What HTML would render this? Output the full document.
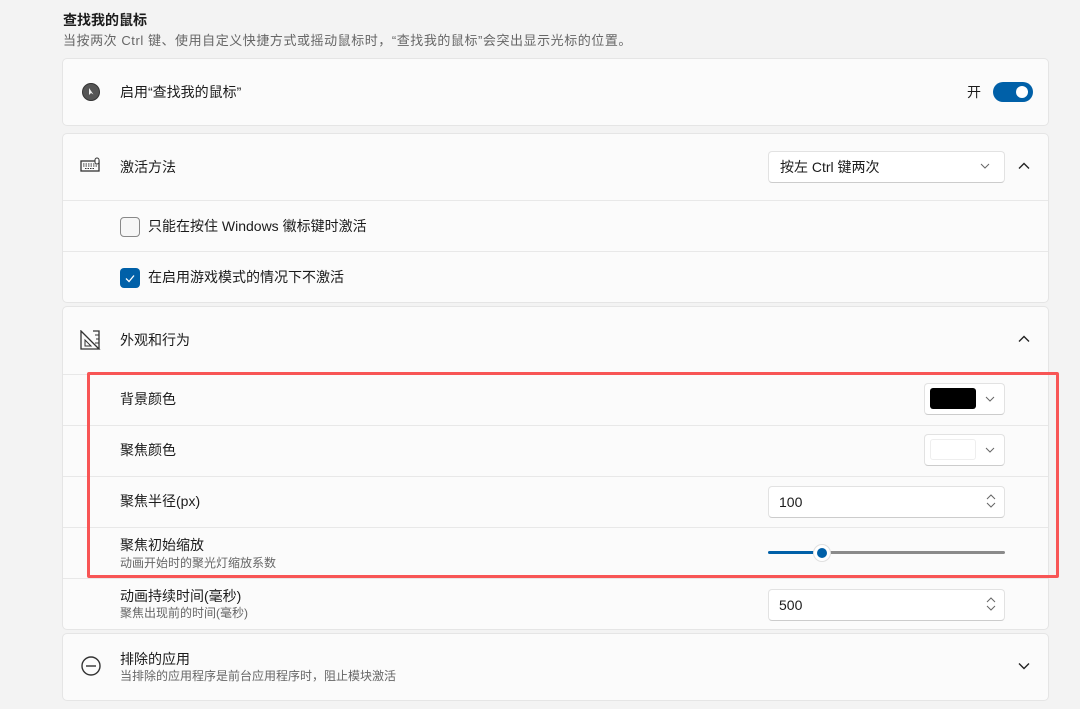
<!DOCTYPE html><html><head><meta charset="utf-8"><style>
*{box-sizing:border-box;margin:0;padding:0}
body{width:1080px;height:709px;background:#f3f3f3;font-family:"Liberation Sans","Noto Sans CJK SC",sans-serif;color:#1b1b1b;position:relative;overflow:hidden}
.a{position:absolute}
.card{position:absolute;left:62px;width:987px;background:#fbfbfb;border:1px solid #e5e5e5;border-radius:5px}
.sep{position:absolute;left:63px;width:985px;height:1px;background:#e8e8e8}
.t{position:absolute;font-size:14px;line-height:20px;white-space:nowrap}
.s{position:absolute;font-size:12px;line-height:16px;color:#666;white-space:nowrap}
.box{position:absolute;background:#fff;border:1px solid #e2e2e2;border-bottom-color:#ccc;border-radius:4px}
</style></head><body>
<div class="t" style="left:63px;top:10px;font-size:14px;font-weight:bold">查找我的鼠标</div>
<div class="t" style="left:63px;top:31px;font-size:13px;letter-spacing:0.55px;color:#666">当按两次 Ctrl 键、使用自定义快捷方式或摇动鼠标时，“查找我的鼠标”会突出显示光标的位置。</div>

<div class="card" style="top:58px;height:68px"></div>
<svg class="a" style="left:81px;top:82px" width="20" height="20"><circle cx="10" cy="10" r="8.5" fill="#555"/><circle cx="10" cy="10" r="8.5" fill="none" stroke="#333" stroke-width="1"/><path d="M8 6 L8 13 L10 11 L12.5 12.5 Z" fill="#eee"/></svg>
<div class="t" style="left:120px;top:82px">启用“查找我的鼠标”</div>
<div class="t" style="left:967px;top:82px">开</div>
<div class="a" style="left:993px;top:82px;width:40px;height:20px;border-radius:10px;background:#0060a8"></div>
<div class="a" style="left:1016px;top:86px;width:12px;height:12px;border-radius:6px;background:#fff"></div>

<div class="card" style="top:133px;height:170px"></div>
<svg class="a" style="left:80px;top:157px" width="22" height="16"><rect x="1" y="4" width="18" height="10" fill="none" stroke="#333" stroke-width="1.3"/><path d="M3 7h14M3 9h14M5 11.5h10" stroke="#333" stroke-width="1" stroke-dasharray="1.5 1"/><rect x="15" y="1" width="4" height="6" rx="2" fill="#fff" stroke="#333"/></svg>
<div class="t" style="left:120px;top:157px">激活方法</div>
<div class="box" style="left:768px;top:151px;width:237px;height:32px"></div>
<div class="t" style="left:780px;top:157px">按左 Ctrl 键两次</div>
<svg class="a" style="left:980px;top:162px" width="10" height="8"><path d="M1 2l4 4 4-4" fill="none" stroke="#666" stroke-width="1"/></svg>
<svg class="a" style="left:1018px;top:162px" width="12" height="8"><path d="M1 6.5l5-5 5 5" fill="none" stroke="#222" stroke-width="1.4"/></svg>
<div class="sep" style="top:200px"></div>
<div class="a" style="left:120px;top:217px;width:20px;height:20px;border:1px solid #888;border-radius:4px;background:#f6f6f6"></div>
<div class="t" style="left:148px;top:216px">只能在按住 Windows 徽标键时激活</div>
<div class="sep" style="top:251px"></div>
<div class="a" style="left:120px;top:268px;width:20px;height:20px;border-radius:4px;background:#0060a8"></div>
<svg class="a" style="left:120px;top:268px" width="20" height="20"><path d="M6 10.5l3 3 5-6" fill="none" stroke="#fff" stroke-width="1.3"/></svg>
<div class="t" style="left:148px;top:267px">在启用游戏模式的情况下不激活</div>

<div class="card" style="top:306px;height:324px"></div>
<svg class="a" style="left:80px;top:330px" width="22" height="20"><path d="M1 1 L19 19 L1 19 Z" fill="none" stroke="#333" stroke-width="1.3"/><path d="M5 10 L11 16 L5 16 Z" fill="none" stroke="#333"/><path d="M13 1 h6 v18" fill="none" stroke="#333" stroke-width="1.3"/><path d="M15 5h4M16 9h3M15 13h4" stroke="#333"/></svg>
<div class="t" style="left:120px;top:330px">外观和行为</div>
<svg class="a" style="left:1018px;top:335px" width="12" height="8"><path d="M1 6.5l5-5 5 5" fill="none" stroke="#222" stroke-width="1.4"/></svg>
<div class="sep" style="top:374px"></div>
<div class="t" style="left:120px;top:389px">背景颜色</div>
<div class="box" style="left:924px;top:383px;width:81px;height:32px"></div>
<div class="a" style="left:930px;top:388px;width:46px;height:21px;background:#000;border-radius:3px"></div>
<svg class="a" style="left:985px;top:395px" width="10" height="8"><path d="M1 2l4 4 4-4" fill="none" stroke="#666"/></svg>
<div class="sep" style="top:425px"></div>
<div class="t" style="left:120px;top:440px">聚焦颜色</div>
<div class="box" style="left:924px;top:434px;width:81px;height:32px"></div>
<div class="a" style="left:930px;top:439px;width:46px;height:21px;background:#fff;border:1px solid #eee;border-radius:3px"></div>
<svg class="a" style="left:985px;top:446px" width="10" height="8"><path d="M1 2l4 4 4-4" fill="none" stroke="#666"/></svg>
<div class="sep" style="top:476px"></div>
<div class="t" style="left:120px;top:491px">聚焦半径(px)</div>
<div class="box" style="left:768px;top:486px;width:237px;height:32px"></div>
<div class="t" style="left:779px;top:492px">100</div>
<svg class="a" style="left:986px;top:494px" width="10" height="14"><path d="M1 5l4-4 4 4M1 9l4 4 4-4" fill="none" stroke="#666"/></svg>
<div class="sep" style="top:527px"></div>
<div class="t" style="left:120px;top:535px">聚焦初始缩放</div>
<div class="s" style="left:120px;top:555px">动画开始时的聚光灯缩放系数</div>
<div class="a" style="left:768px;top:551px;width:48px;height:3px;background:#0060a8;border-radius:2px"></div>
<div class="a" style="left:828px;top:551px;width:177px;height:3px;background:#8a8a8a;border-radius:2px"></div>
<div class="a" style="left:813px;top:544px;width:18px;height:18px;border-radius:9px;background:#fff;border:1px solid #e0e0e0"></div>
<div class="a" style="left:817px;top:548px;width:10px;height:10px;border-radius:5px;background:#0060a8"></div>
<div class="sep" style="top:578px"></div>
<div class="t" style="left:120px;top:586px">动画持续时间(毫秒)</div>
<div class="s" style="left:120px;top:605px">聚焦出现前的时间(毫秒)</div>
<div class="box" style="left:768px;top:589px;width:237px;height:32px"></div>
<div class="t" style="left:779px;top:595px">500</div>
<svg class="a" style="left:986px;top:597px" width="10" height="14"><path d="M1 5l4-4 4 4M1 9l4 4 4-4" fill="none" stroke="#666"/></svg>

<div class="a" style="left:87px;top:372px;width:972px;height:206px;border:3px solid #f85555;border-radius:2px"></div>

<div class="card" style="top:633px;height:68px"></div>
<svg class="a" style="left:80px;top:655px" width="22" height="22"><circle cx="11" cy="11" r="9" fill="none" stroke="#333" stroke-width="1.4"/><path d="M6 11h10" stroke="#333" stroke-width="1.4"/></svg>
<div class="t" style="left:120px;top:649px">排除的应用</div>
<div class="s" style="left:120px;top:668px">当排除的应用程序是前台应用程序时，阻止模块激活</div>
<svg class="a" style="left:1018px;top:662px" width="12" height="8"><path d="M1 1.5l5 5 5-5" fill="none" stroke="#222" stroke-width="1.4"/></svg>
</body></html>
